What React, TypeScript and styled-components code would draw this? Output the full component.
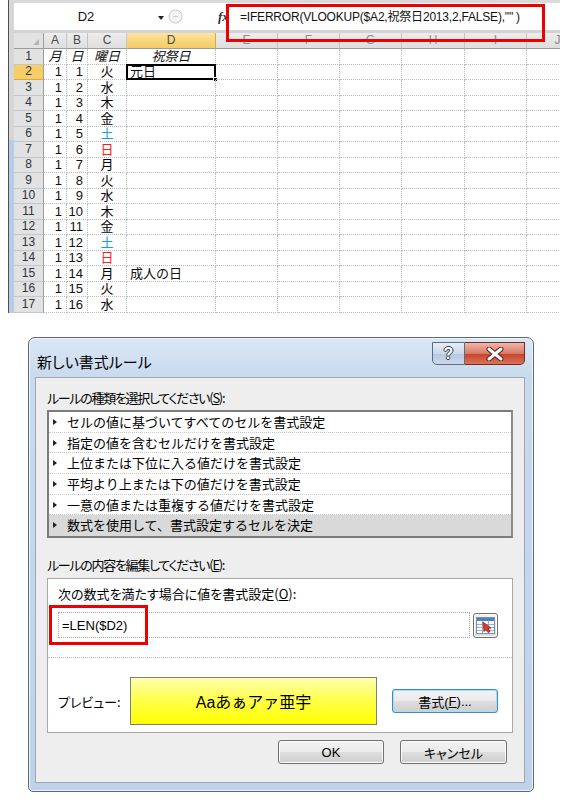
import React from "react";
import styled, { createGlobalStyle } from "styled-components";

const GlobalStyle = createGlobalStyle`
  * { box-sizing: border-box; }
  html, body { margin: 0; padding: 0; background: #ffffff; }
  body {
    font-family: "Liberation Sans", "Noto Sans CJK JP", sans-serif;
    color: #000;
  }
`;

const COLUMNS = ["A", "B", "C", "D", "E", "F", "G", "H", "I", "J"];
const WEEK = ["火", "水", "木", "金", "土", "日", "月", "火", "水", "木", "金", "土", "日", "月", "火", "水"];
const HOLIDAYS: Record<number, string> = { 0: "元日", 13: "成人の日" };
const RULE_TYPES = [
  "セルの値に基づいてすべてのセルを書式設定",
  "指定の値を含むセルだけを書式設定",
  "上位または下位に入る値だけを書式設定",
  "平均より上または下の値だけを書式設定",
  "一意の値または重複する値だけを書式設定",
  "数式を使用して、書式設定するセルを決定",
];

const dayColor = (d: string) => (d === "土" ? "#1a9be6" : d === "日" ? "#ff1a1a" : "#000");

const RefIcon = () => (
  <svg width="19" height="17" viewBox="0 0 19 17">
    <rect x="0.5" y="0.5" width="18" height="16" fill="#fff" stroke="#7c8fa8" />
    <rect x="1" y="1" width="17" height="3" fill="#4f7fc6" />
    <path d="M1 7.5h17M1 10.5h17M1 13.5h17M6.5 4v12M12.5 4v12" stroke="#8fb0dc" strokeWidth="1" />
    <path d="M7 5l8 6-3 .5 2 3-2 1-2-3-2 2z" fill="#e23b22" stroke="#8a1a0c" strokeWidth="0.7" />
  </svg>
);

const CloseGlyph = () => (
  <svg width="18" height="14" viewBox="0 0 18 14">
    <path d="M3 2l12 10M15 2L3 12" stroke="#5a1e14" strokeWidth="5" strokeLinecap="round" />
    <path d="M3 2l12 10M15 2L3 12" stroke="#ffffff" strokeWidth="3" strokeLinecap="round" />
  </svg>
);

const App = () => (
  <>
    <GlobalStyle />
    <Page>
      <SheetArea>
        <SheetFrame>
          <SideStrip />
          <SheetBody>
            <FormulaBar>
              <NameBox>D2</NameBox>
              <NameArrow />
              <svg width="15" height="15" viewBox="0 0 15 15" style={{ marginLeft: 3 }}>
                <circle cx="7.5" cy="7.5" r="6.5" fill="#f4f4f4" stroke="#c9c9c9" />
                <path d="M5 7.5h5" stroke="#d0d0d0" />
              </svg>
              <FxLabel>fx</FxLabel>
              <FormulaText>=IFERROR(VLOOKUP($A2,祝祭日2013,2,FALSE),"" )</FormulaText>
            </FormulaBar>
            <Grid>
              <CornerCell />
              {COLUMNS.map((c) => (
                <ColHead key={c} $active={c === "D"} $faded={c > "D"}>
                  {c}
                </ColHead>
              ))}
              <RowHead>1</RowHead>
              <Cell $align="center" $italic>月</Cell>
              <Cell $align="center" $italic>日</Cell>
              <Cell $align="center" $italic>曜日</Cell>
              <Cell $align="center" $italic>祝祭日</Cell>
              {COLUMNS.slice(4).map((c) => (
                <Cell key={c} />
              ))}
              {WEEK.map((day, i) => (
                <React.Fragment key={i}>
                  <RowHead $active={i === 0}>{i + 2}</RowHead>
                  <Cell $align="right">1</Cell>
                  <Cell $align="right">{i + 1}</Cell>
                  <Cell $align="center" $color={dayColor(day)}>{day}</Cell>
                  <Cell $align="left">
                    {HOLIDAYS[i]}
                    {i === 0 && (
                      <Selection>
                        <FillHandle />
                      </Selection>
                    )}
                  </Cell>
                  {COLUMNS.slice(4).map((c) => (
                    <Cell key={c} />
                  ))}
                </React.Fragment>
              ))}
            </Grid>
          </SheetBody>
        </SheetFrame>
        <Callout $left={226} $top={4} $width={319} $height={38} />
      </SheetArea>

      <Dialog>
        <TitleBar>
          <Title>新しい書式ルール</Title>
          <Caption>
            <CaptionButton $kind="help">?</CaptionButton>
            <CaptionButton $kind="close">
              <CloseGlyph />
            </CaptionButton>
          </Caption>
        </TitleBar>
        <Client>
          <Label $top={12}>
            ルールの種類を選択してください(<u>S</u>):
          </Label>
          <ListBox>
            {RULE_TYPES.map((t, i) => (
              <ListItem key={t} $selected={i === RULE_TYPES.length - 1}>
                <Marker />
                {t}
              </ListItem>
            ))}
          </ListBox>
          <Label $top={19}>
            ルールの内容を編集してください(<u>E</u>):
          </Label>
          <EditBox>
            <EditLabel>
              次の数式を満たす場合に値を書式設定(<u>O</u>):
            </EditLabel>
            <InputRow>
              <FormulaInput>=LEN($D2)</FormulaInput>
              <RefButton>
                <RefIcon />
              </RefButton>
            </InputRow>
            <Separator />
            <PreviewRow>
              <PreviewLabel>プレビュー:</PreviewLabel>
              <Swatch>Aaあぁアァ亜宇</Swatch>
              <PushButton $w={106} $focused style={{ marginLeft: 15 }}>
                書式(<u>F</u>)...
              </PushButton>
            </PreviewRow>
            <Callout $left={1} $top={26} $width={99} $height={40} />
          </EditBox>
          <ButtonRow>
            <PushButton $w={106}>OK</PushButton>
            <PushButton $w={107}>キャンセル</PushButton>
          </ButtonRow>
        </Client>
      </Dialog>
    </Page>
  </>
);

export default App;

const Page = styled.div`
  width: 567px;
  height: 809px;
  overflow: hidden;
  background: #fff;
`;

/* ---------- spreadsheet ---------- */

const SheetArea = styled.div`
  position: relative;
  height: 313px;
  padding-left: 8px;
`;

const SheetFrame = styled.div`
  display: flex;
  width: 552px;
  height: 100%;
  border-left: 1px solid #4f4f4f;
  overflow: hidden;
`;

const SideStrip = styled.div`
  flex: none;
  width: 5px;
  background: linear-gradient(#d6d6d6 0, #d6d6d6 140px, #b7cce6 140px, #b7cce6 100%);
`;

const SheetBody = styled.div`
  flex: 1;
  min-width: 0;
  display: flex;
  flex-direction: column;
`;

const FormulaBar = styled.div`
  flex: none;
  height: 33px;
  display: flex;
  align-items: center;
  background: #fff;
  border-top: 3px solid #d9d9d9;
  border-bottom: 3px solid #d3d3d3;
  font-size: 13px;
  line-height: 16px;
  white-space: nowrap;
`;

const NameBox = styled.div`
  width: 144px;
  text-align: center;
  color: #111;
`;

const NameArrow = styled.span`
  width: 0;
  height: 0;
  margin: 2px 1px 0 0;
  border-left: 3px solid transparent;
  border-right: 3px solid transparent;
  border-top: 4px solid #222;
`;

const FxLabel = styled.span`
  margin-left: 35px;
  width: 14px;
  font-family: "Liberation Serif", serif;
  font-style: italic;
  font-weight: bold;
  font-size: 13px;
  color: #333;
`;

const FormulaText = styled.span`
  margin-left: 8px;
  font-size: 12px;
  letter-spacing: -0.2px;
  color: #111;
`;

const Grid = styled.div`
  display: grid;
  grid-template-columns: 30px 23px 21px 39px 89px 62px 62px 62px 63px 62px 62px;
  grid-template-rows: 16px repeat(17, 15.5px);
  font-size: 13px;
  line-height: 15px;
`;

const CornerCell = styled.div`
  position: relative;
  background: #e2e2e2;
  border-right: 1px solid #9c9c9c;
  border-bottom: 1px solid #9c9c9c;

  &::after {
    content: "";
    position: absolute;
    right: 4px;
    bottom: 3px;
    border-left: 6px solid transparent;
    border-bottom: 6px solid #b3b3b3;
  }
`;

const ColHead = styled.div<{ $active?: boolean; $faded?: boolean }>`
  display: flex;
  align-items: center;
  justify-content: center;
  font-size: 12px;
  color: ${(p) => (p.$faded ? "#8d8d8d" : "#4a4a4a")};
  background: ${(p) => (p.$active ? "linear-gradient(#fbe3a0, #f6cb62)" : "linear-gradient(#ededed, #dedede)")};
  border-right: 1px solid ${(p) => (p.$active ? "#d8a93f" : "#c4c4c4")};
  border-bottom: 1px solid #9c9c9c;
`;

const RowHead = styled.div<{ $active?: boolean }>`
  display: flex;
  align-items: center;
  justify-content: center;
  font-size: 12px;
  color: #2d3340;
  background: ${(p) => (p.$active ? "#f7cd68" : "#e2e2e2")};
  border-right: 1px solid #9c9c9c;
  border-bottom: 1px solid ${(p) => (p.$active ? "#d8a93f" : "#c2c6cf")};
`;

const Cell = styled.div<{ $align?: "left" | "center" | "right"; $italic?: boolean; $color?: string }>`
  position: relative;
  display: flex;
  align-items: center;
  justify-content: ${(p) => (p.$align === "right" ? "flex-end" : p.$align === "center" ? "center" : "flex-start")};
  padding: 0 ${(p) => (p.$align === "right" ? 4 : 0)}px 0 ${(p) => (p.$align === "left" ? 3 : 0)}px;
  font-style: ${(p) => (p.$italic ? "italic" : "normal")};
  color: ${(p) => p.$color ?? "#111"};
  white-space: nowrap;
  border-right: 1px dotted #bdbdbd;
  border-bottom: 1px dotted #bdbdbd;
`;

const Selection = styled.div`
  position: absolute;
  left: -1px;
  top: -1px;
  right: -1px;
  bottom: -1px;
  border: 2px solid #000;
`;

const FillHandle = styled.div`
  position: absolute;
  right: -4px;
  bottom: -4px;
  width: 5px;
  height: 5px;
  background: #000;
  border: 1px solid #fff;
`;

const Callout = styled.div<{ $left: number; $top: number; $width: number; $height: number }>`
  position: absolute;
  left: ${(p) => p.$left}px;
  top: ${(p) => p.$top}px;
  width: ${(p) => p.$width}px;
  height: ${(p) => p.$height}px;
  border: 3px solid #ee0000;
  pointer-events: none;
`;

/* ---------- dialog ---------- */

const Dialog = styled.div`
  margin: 24px 0 0 28px;
  width: 506px;
  height: 455px;
  display: flex;
  flex-direction: column;
  padding: 0 8px 8px 6px;
  border: 1px solid #5f6872;
  border-radius: 7px 7px 5px 5px;
  background: linear-gradient(180deg, #dae6f4 0, #c9daee 40px, #bfd2ea 100%);
  box-shadow: inset 0 0 0 1px #eef4fb;
`;

const TitleBar = styled.div`
  flex: none;
  height: 39px;
  display: flex;
  justify-content: space-between;
  align-items: flex-start;
`;

const Title = styled.div`
  margin: 15px 0 0 2px;
  font-family: "Noto Sans CJK JP", sans-serif;
  font-size: 15px;
  line-height: 18px;
  font-feature-settings: "palt";
  color: #000;
`;

const Caption = styled.div`
  display: flex;
  margin-top: 4px;
`;

const CaptionButton = styled.div<{ $kind: "help" | "close" }>`
  width: ${(p) => (p.$kind === "help" ? 33 : 60)}px;
  height: 23px;
  display: flex;
  align-items: center;
  justify-content: center;
  border: 1px solid ${(p) => (p.$kind === "help" ? "#5b6b80" : "#6e2d24")};
  border-left-width: ${(p) => (p.$kind === "help" ? 1 : 0)}px;
  border-radius: ${(p) => (p.$kind === "help" ? "0 0 0 5px" : "0 0 5px 0")};
  background: ${(p) =>
    p.$kind === "help"
      ? "linear-gradient(#e6edf6, #cbd8e8 50%, #b5c7de 51%, #cbdaed)"
      : "linear-gradient(#ecb7aa, #d97a66 50%, #c4432c 51%, #dc7257)"};
  color: #fff;
  font-family: "Liberation Sans", sans-serif;
  font-weight: bold;
  font-size: 16px;
  text-shadow: 1px 0 0 #2a3648, -1px 0 0 #2a3648, 0 1px 0 #2a3648, 0 -1px 0 #2a3648;
`;

const Client = styled.div`
  flex: 1;
  display: flex;
  flex-direction: column;
  padding: 0 11px;
  background: #eeeeee;
  border: 1px solid #9ea7b3;
  font-family: "Noto Sans CJK JP", sans-serif;
  font-size: 13px;
`;

const Label = styled.div<{ $top: number }>`
  margin-top: ${(p) => p.$top}px;
  height: 16px;
  line-height: 16px;
  letter-spacing: -1.3px;
  font-feature-settings: "palt";
  white-space: nowrap;
`;

const ListBox = styled.div`
  margin-top: 4px;
  height: 128px;
  display: flex;
  flex-direction: column;
  background: #fff;
  border: 2px solid #7b7b7b;
  border-right-color: #8c8c8c;
`;

const ListItem = styled.div<{ $selected?: boolean }>`
  flex: 1;
  display: flex;
  align-items: center;
  background: ${(p) => (p.$selected ? "#d9d9d9" : "#fff")};
  border-bottom: 1px dotted ${(p) => (p.$selected ? "transparent" : "#c9c9c9")};
  font-size: 13px;
  line-height: 16px;
  white-space: nowrap;
`;

const Marker = styled.span`
  width: 0;
  height: 0;
  margin: 0 10px 0 4px;
  border-top: 3.5px solid transparent;
  border-bottom: 3.5px solid transparent;
  border-left: 4px solid #222;
`;

const EditBox = styled.div`
  position: relative;
  margin-top: 5px;
  height: 155px;
  background: #fff;
  border: 1px solid #a8a8a8;
`;

const EditLabel = styled.div`
  margin: 7px 0 0 10px;
  height: 16px;
  line-height: 16px;
  font-feature-settings: "palt";
  white-space: nowrap;
`;

const InputRow = styled.div`
  display: flex;
  align-items: center;
  gap: 3px;
  margin: 10px 0 0 10px;
`;

const FormulaInput = styled.div`
  width: 412px;
  height: 26px;
  display: flex;
  align-items: center;
  padding-left: 3px;
  border: 1px dotted #a9a9a9;
  font-family: "Liberation Sans", sans-serif;
  font-size: 13px;
`;

const RefButton = styled.div`
  width: 25px;
  height: 25px;
  display: flex;
  align-items: center;
  justify-content: center;
  border: 1px solid #6f6f6f;
  border-radius: 3px;
  background: linear-gradient(#f5f5f5, #dcdcdc);
  box-shadow: inset 0 0 0 1px #fff;
`;

const Separator = styled.div`
  margin-top: 19px;
  border-top: 1px dotted #b8b8b8;
`;

const PreviewRow = styled.div`
  display: flex;
  align-items: center;
  margin-top: 19px;
  padding-left: 10px;
`;

const PreviewLabel = styled.div`
  width: 72px;
  font-feature-settings: "palt";
`;

const Swatch = styled.div`
  width: 247px;
  height: 48px;
  display: flex;
  align-items: center;
  justify-content: center;
  border: 1px solid #7d7d7d;
  background: linear-gradient(#ffffb0 0%, #ffff50 45%, #ffff00 100%);
  font-size: 16px;
  font-family: "Liberation Sans", "Noto Sans CJK JP", sans-serif;
`;

const PushButton = styled.div<{ $w: number; $focused?: boolean }>`
  width: ${(p) => p.$w}px;
  height: 24px;
  display: flex;
  align-items: center;
  justify-content: center;
  border: 1px solid ${(p) => (p.$focused ? "#3b8ccc" : "#707070")};
  border-radius: 3px;
  background: linear-gradient(#f3f3f3 0%, #ebebeb 48%, #dddddd 52%, #cfcfcf 100%);
  box-shadow: inset 0 0 0 1px ${(p) => (p.$focused ? "#a6def6" : "#fbfbfb")};
  font-family: "Liberation Sans", "Noto Sans CJK JP", sans-serif;
  font-size: 13px;
  font-feature-settings: "palt";
  color: #000;
`;

const ButtonRow = styled.div`
  display: flex;
  justify-content: flex-end;
  gap: 16px;
  margin: 7px 6px 0 0;
`;
